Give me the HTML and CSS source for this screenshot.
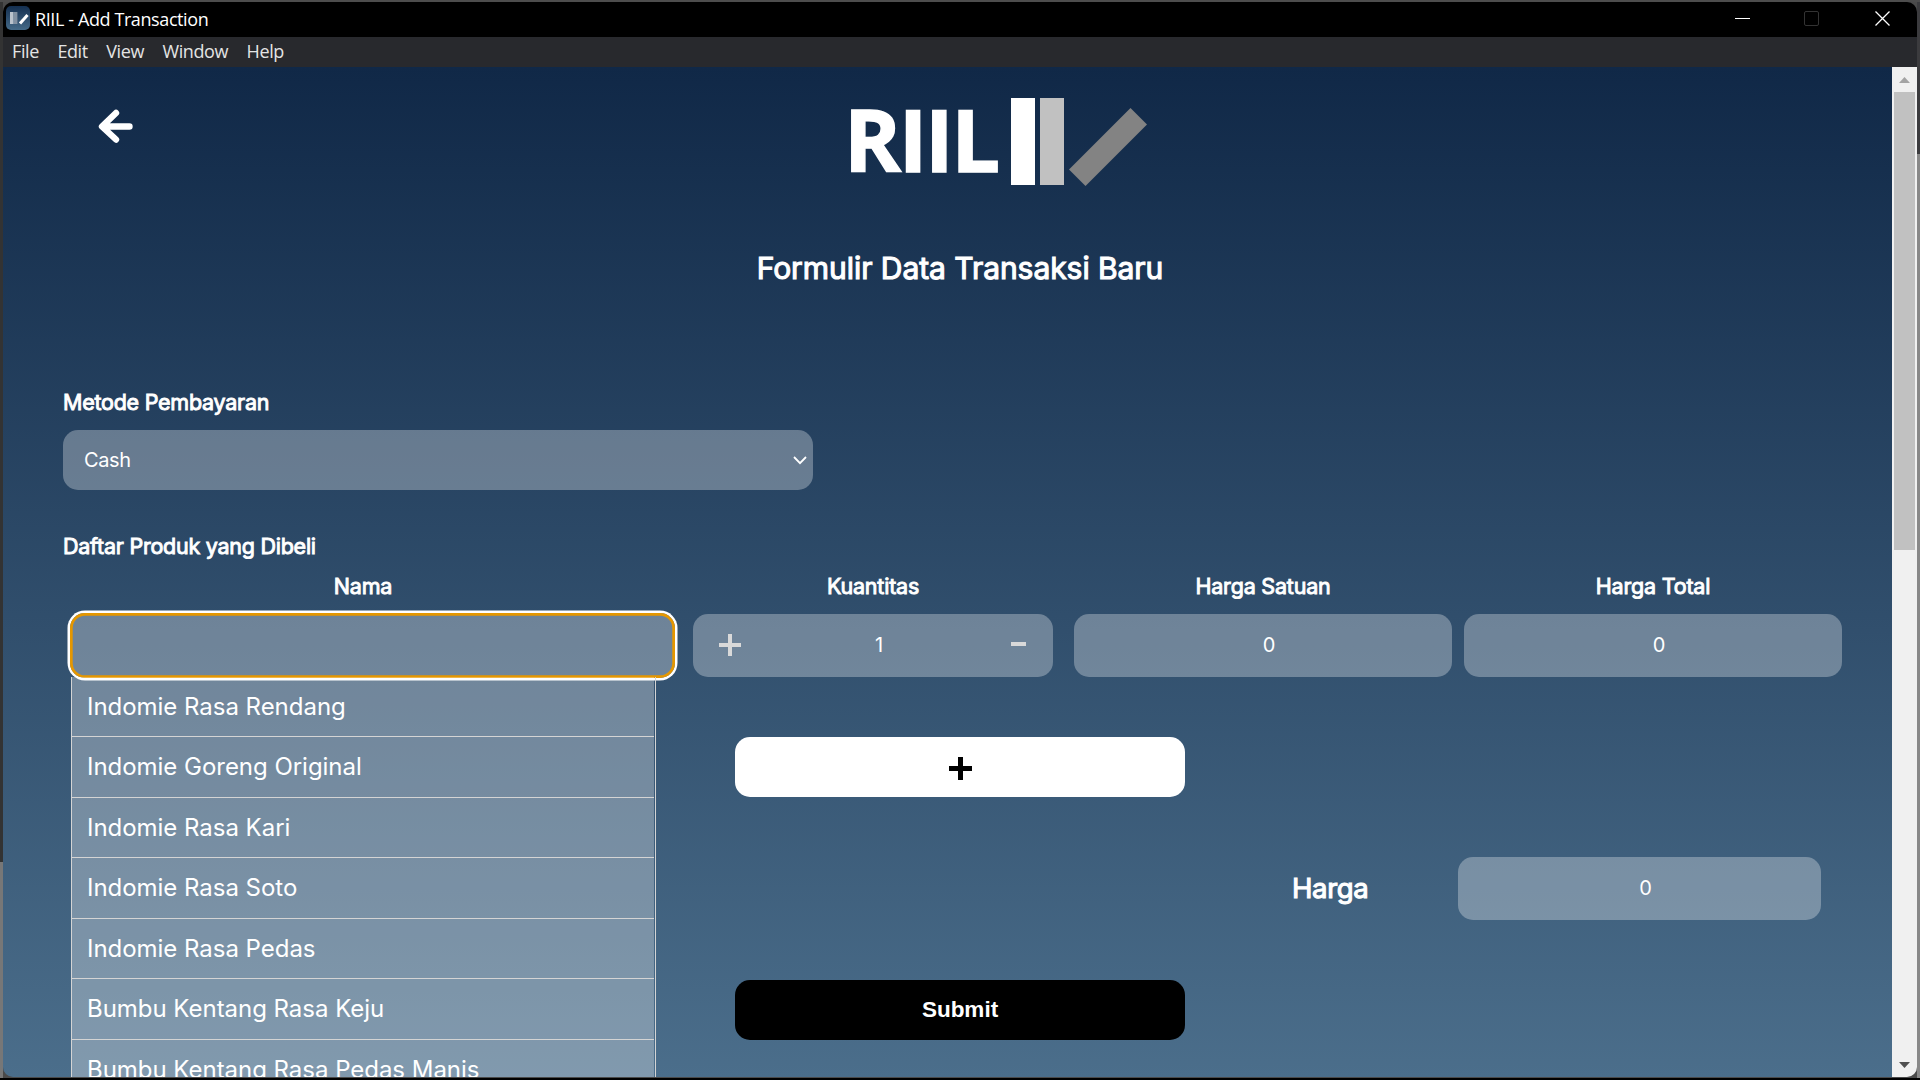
FILE: index.html
```html
<!DOCTYPE html>
<html lang="id">
<head>
<meta charset="utf-8">
<title>RIIL - Add Transaction</title>
<link rel="stylesheet" href="styles.css">
</head>
<body>
<div class="window">
  <header class="titlebar">
    <svg class="app-icon" width="24" height="24" viewBox="0 0 24 24">
      <defs><linearGradient id="ig" x1="0" y1="0" x2="0" y2="1"><stop offset="0" stop-color="#142f50"/><stop offset="1" stop-color="#456a88"/></linearGradient></defs>
      <rect width="24" height="24" rx="5" fill="url(#ig)"/>
      <rect x="4" y="6" width="3.6" height="12" fill="#b9c2cc"/><rect x="8" y="6" width="3.4" height="12" fill="#8291a2"/>
      <path d="M14 17.5 21.5 9" stroke="#fff" stroke-width="3"/>
    </svg>
    <span class="app-title">RIIL - Add Transaction</span>
    <svg class="controls" width="160" height="35" viewBox="0 0 160 35" fill="none">
      <path d="M0 16.5H15" stroke="#fff"/>
      <rect x="69.5" y="9.5" width="14" height="14" rx="1.5" stroke="#333"/>
      <path d="M140.5 9.5 154.5 23.5M154.5 9.5 140.5 23.5" stroke="#fff" stroke-width="1.3"/>
    </svg>
  </header>
  <nav class="menubar"><span>File</span><span>Edit</span><span>View</span><span>Window</span><span>Help</span></nav>
  <div class="viewport">
    <main class="page">
      <div class="brand">
        <svg class="back" width="38" height="36" viewBox="0 0 38 36" fill="none" stroke="#fff" stroke-width="6.4" stroke-linecap="round" stroke-linejoin="round"><path d="M19 5 5 18.500 19 31.500M6 18.500H32.500"/></svg>
        <span class="wordmark">RIIL</span>
        <svg class="bars" width="137" height="90" viewBox="0 0 137 90">
          <rect x="0" y="1" width="24" height="87" fill="#fff"/>
          <rect x="29" y="1" width="24" height="87" fill="#c1c1c1"/>
          <path d="M119.500 11 136 27.500 74.500 89 58 72.500Z" fill="#838383"/>
        </svg>
      </div>
      <h1 class="title">Formulir Data Transaksi Baru</h1>
      <label class="label">Metode Pembayaran</label>
      <div class="field select"><span>Cash</span>
        <svg width="14" height="9" viewBox="0 0 14 9" fill="none" stroke="#fff" stroke-width="1.8"><path d="M1 1 7 7.200 13 1"/></svg>
      </div>
      <label class="label second">Daftar Produk yang Dibeli</label>
      <div class="columns heads"><span>Nama</span><span>Kuantitas</span><span>Harga Satuan</span><span>Harga Total</span></div>
      <div class="columns row">
        <div class="name-cell">
          <div class="field name-input"></div>
          <ul class="options">
            <li>Indomie Rasa Rendang</li>
            <li>Indomie Goreng Original</li>
            <li>Indomie Rasa Kari</li>
            <li>Indomie Rasa Soto</li>
            <li>Indomie Rasa Pedas</li>
            <li>Bumbu Kentang Rasa Keju</li>
            <li>Bumbu Kentang Rasa Pedas Manis</li>
          </ul>
        </div>
        <div class="field qty">
          <svg width="22" height="22" viewBox="0 0 22 22" stroke="#d9d9d9" stroke-width="4"><path d="M0 11H22M11 0V22"/></svg>
          <span class="count">1</span>
          <svg width="15" height="22" viewBox="0 0 15 22" stroke="#d9d9d9" stroke-width="4"><path d="M0 10H15"/></svg>
        </div>
        <div class="field number">0</div>
        <div class="field number">0</div>
      </div>
      <div class="button add"><svg width="23" height="23" viewBox="0 0 23 23" stroke="#000" stroke-width="5"><path d="M0 11.500H23M11.500 0V23"/></svg></div>
      <div class="total"><span class="total-label">Harga</span><div class="field number sum">0</div></div>
      <div class="button submit">Submit</div>
    </main>
    <aside class="scrollbar">
      <svg width="11" height="6" viewBox="0 0 11 6"><path d="M0 6 5.500 0 11 6Z" fill="#a3a3a3"/></svg>
      <div class="thumb"></div>
      <svg class="down" width="11" height="6" viewBox="0 0 11 6"><path d="M0 0 5.500 6 11 0Z" fill="#505050"/></svg>
    </aside>
  </div>
</div>
</body>
</html>
```
FILE: styles.css
```css
* { box-sizing: border-box; }
body {
  margin: 0;
  width: 1920px;
  height: 1080px;
  overflow: hidden;
  padding: 2px 3px 3px;
  background:
    linear-gradient(#4d4d4d, #4d4d4d) 0 0 / 100% 2px no-repeat,
    linear-gradient(#000, #000) 0 1078px / 100% 2px no-repeat,
    linear-gradient(#333 0 862px, #777 862px) 0 0 / 3px 100% no-repeat,
    linear-gradient(#3b3b3e 0 154px, #888 154px) 100% 0 / 3px 100% no-repeat,
    #4a4a4a;
  font-family: Inter, "Liberation Sans", sans-serif;
  color: #fff;
}
.window {
  height: 1075px;
  border-radius: 10px;
  overflow: hidden;
  display: flex;
  flex-direction: column;
}
.titlebar {
  height: 35px;
  background: #000;
  display: flex;
  align-items: center;
  padding: 0 6px 0 3px;
  font: 18px "Open Sans", "Noto Sans", sans-serif;
  letter-spacing: -.4px;
}
.app-title { margin-left: 5px; flex: 1; padding-bottom: 2px; }
.app-icon { margin-bottom: 3px; }
.controls { margin-right: 16px; }
.menubar {
  height: 30px;
  background: #28292d;
  display: flex;
  align-items: center;
  gap: 18.5px;
  padding: 0 0 2px 9px;
  color: #e4e4e4;
  font: 18px "Open Sans", "Noto Sans", sans-serif;
  letter-spacing: -.4px;
}
.viewport { flex: 1; min-height: 0; display: flex; }
.page {
  flex: 1;
  min-width: 0;
  overflow: hidden;
  background: linear-gradient(#102847, #4b6e8b);
}
.brand { height: 134px; display: flex; align-items: flex-start; }
.back { margin: 41px 0 0 94px; }
.wordmark {
  margin: 23px 0 0 709px;
  width: 167px;
  font: 700 86.5px/98px "Open Sans", sans-serif;
  letter-spacing: -2.4px;
  -webkit-text-stroke: 1.4px #fff;
}
.bars { margin-top: 30px; }
.title {
  margin: 47px 0 0;
  padding-left: 25px;
  height: 40px;
  font-size: 30px;
  line-height: 40px;
  letter-spacing: -.05px;
  text-align: center;
  font-weight: 400;
  -webkit-text-stroke: 1.1px #fff;
}
.label {
  display: block;
  margin: 100px 0 0 60px;
  height: 28px;
  line-height: 28px;
  font-size: 21.5px;
  letter-spacing: -.25px;
  -webkit-text-stroke: .9px #fff;
}
.label.second { margin-top: 42px; }
.field {
  background: rgba(255, 255, 255, .3);
  border-radius: 15px;
  font-size: 20px;
}
.select {
  margin: 14px 0 0 60px;
  width: 750px;
  height: 60px;
  padding: 0 6px 0 21px;
  display: flex;
  align-items: center;
  justify-content: space-between;
  letter-spacing: -.4px;
}
.columns { display: grid; grid-template-columns: 630px 390px 390px 390px; margin-left: 45px; }
.heads {
  height: 54px;
  line-height: 53px;
  text-align: center;
  font-size: 21.5px;
  letter-spacing: -.2px;
  -webkit-text-stroke: .9px #fff;
}
.row { height: 63px; justify-items: center; }
.name-cell { position: relative; width: 605px; margin-left: 19px; }
.name-input {
  height: 65px;
  margin-top: -1px;
  box-shadow: 0 0 0 2.5px #fff, inset 0 0 0 2.7px #e59700;
}
.options {
  position: absolute;
  left: 1px;
  top: 62.6px;
  width: 585px;
  margin: 0;
  padding: 0 1px 0 0;
  list-style: none;
  border: solid #d4d4d4;
  border-width: 0 1px;
  font-size: 24px;
  letter-spacing: -.03px;
}
.options li {
  height: 60.5px;
  padding-left: 15px;
  display: flex;
  align-items: center;
  background: rgba(255, 255, 255, .3);
  border-bottom: 1px solid #d4d4d4;
}
.qty {
  width: 360px;
  height: 63px;
  padding: 0 27px 1px 26px;
  display: flex;
  align-items: center;
  justify-content: space-between;
}
.count { margin-left: 6px; }
.number {
  width: 378px;
  height: 63px;
  padding: 0 0 2px 12px;
  display: flex;
  align-items: center;
  justify-content: center;
}
.button {
  width: 450px;
  height: 60px;
  margin: 60px 0 0 732px;
  border-radius: 15px;
  display: flex;
  align-items: center;
  justify-content: center;
}
.add { background: #fff; padding-top: 2px; }
.total { margin: 60px 0 0 1289px; display: flex; align-items: center; }
.total-label { width: 166px; padding-bottom: 2px; font-size: 27.5px; letter-spacing: -.35px; -webkit-text-stroke: 1.1px #fff; }
.sum { width: 363px; }
.submit { background: #000; padding-bottom: 1px; font: 700 22.5px "Liberation Sans", sans-serif; }
.scrollbar {
  width: 25px;
  background: #f0f0f0;
  display: flex;
  flex-direction: column;
  align-items: center;
  padding: 10px 0 9px;
}
.thumb { width: 21px; height: 458px; margin-top: 9px; background: #c1c1c1; }
.down { margin-top: auto; }
```
